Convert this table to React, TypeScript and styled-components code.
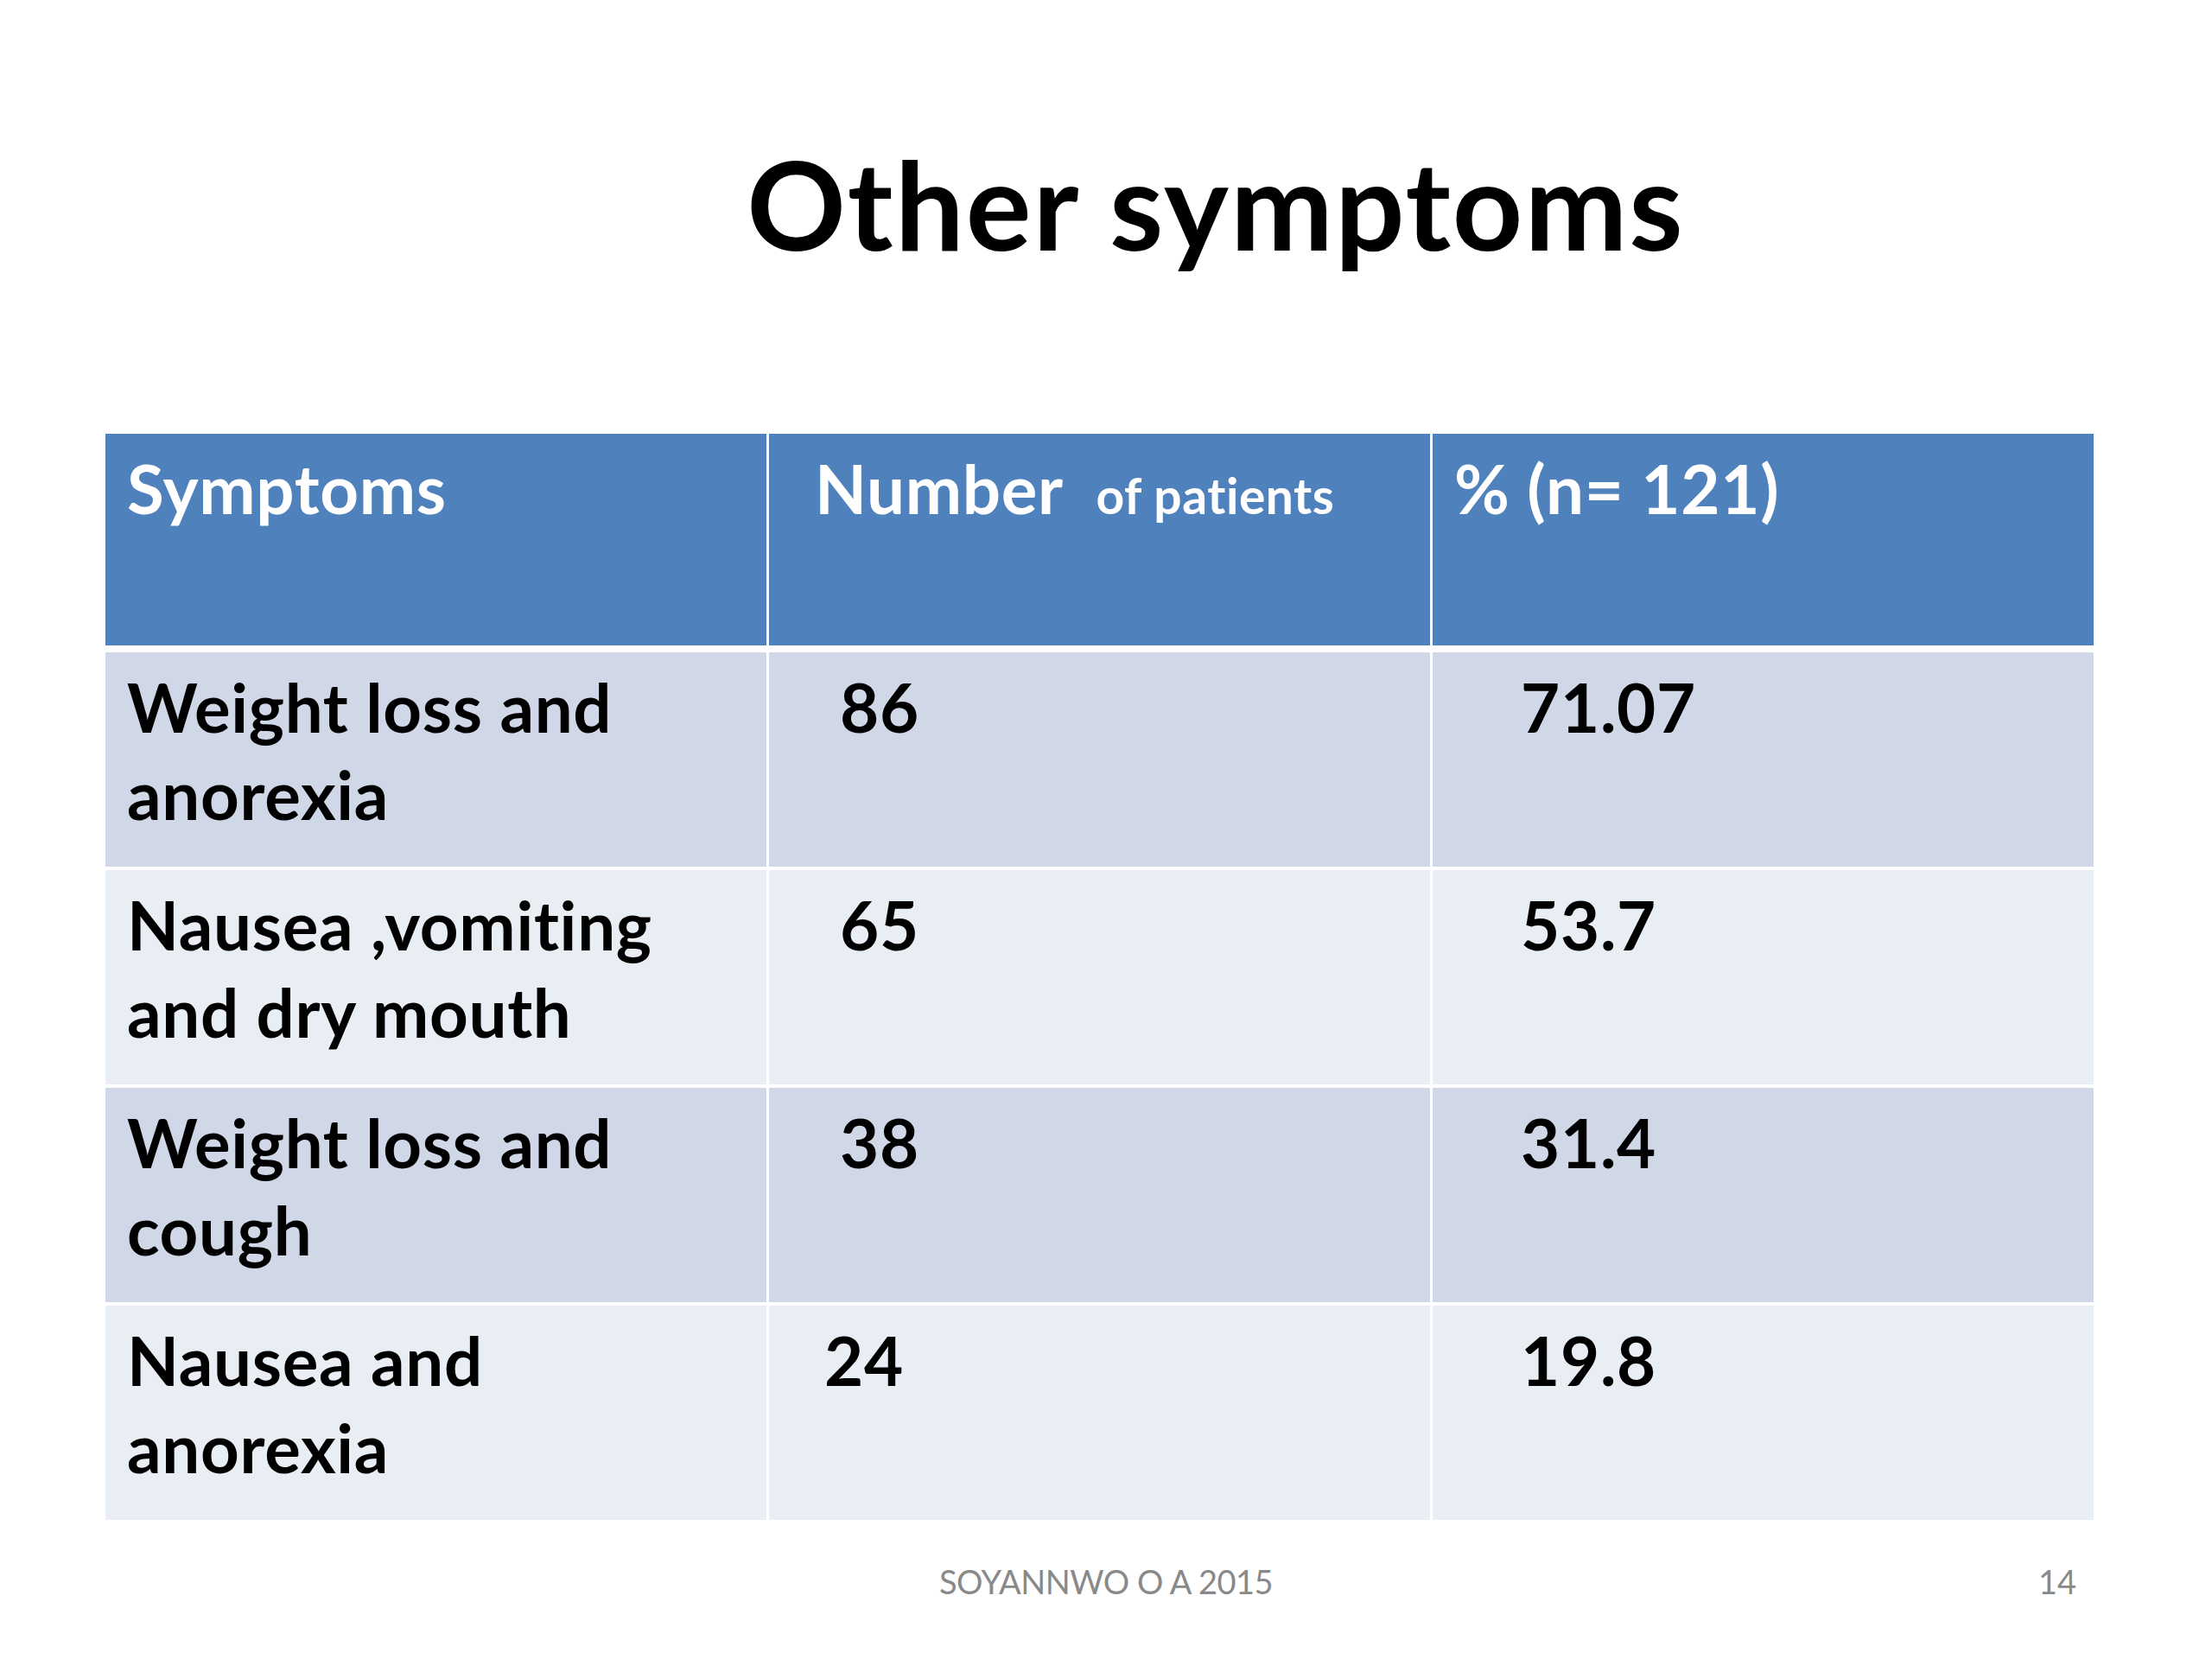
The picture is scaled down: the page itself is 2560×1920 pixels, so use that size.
import React from "react";
import styled, { createGlobalStyle } from "styled-components";

const Global = createGlobalStyle`
  html, body { margin: 0; padding: 0; background: #ffffff; }
  body { font-family: Lato, "Open Sans", sans-serif; }
`;

const Slide = styled.div`
  width: 2560px;
  height: 1920px;
  background: #ffffff;
  display: flex;
  flex-direction: column;
  overflow: hidden;
`;

const TitleBar = styled.div`
  padding: 164px 0 0 254px;
  height: 502px;
  flex-shrink: 0;
  box-sizing: border-box;
  text-align: center;
`;

const Title = styled.h1`
  margin: 0;
  font-family: Lato, sans-serif;
  font-weight: 700;
  font-size: 142px;
  line-height: 142px;
  color: #000000;
  letter-spacing: 2px;
`;

const Table = styled.div`
  margin-left: 122px;
  width: 2301px;
  display: flex;
  flex-direction: column;
  gap: 4px;
`;

const Row = styled.div<{ $kind: "head" | "odd" | "even" }>`
  display: grid;
  grid-template-columns: repeat(3, 1fr);
  column-gap: 3px;
  height: ${(p) => (p.$kind === "head" ? "245px" : "248px")};
  margin-bottom: ${(p) => (p.$kind === "head" ? "4px" : "0")};
`;

const Cell = styled.div<{ $kind: "head" | "odd" | "even"; $indent?: number }>`
  background: ${(p) =>
    p.$kind === "head" ? "#4f81bd" : p.$kind === "odd" ? "#d0d8e8" : "#e9edf4"};
  color: ${(p) => (p.$kind === "head" ? "#ffffff" : "#000000")};
  padding: 13px 20px 0 ${(p) => 25 + (p.$indent ?? 0)}px;
  font-family: Lato, sans-serif;
  font-weight: 700;
  font-size: 78px;
  line-height: 101px;
  letter-spacing: 0.7px;
  box-sizing: border-box;
`;

const Small = styled.span`
  font-size: 57px;
  letter-spacing: 0.5px;
`;

const Footer = styled.div`
  margin-top: 52px;
  padding: 0 157px;
  display: grid;
  grid-template-columns: 1fr auto 1fr;
  font-family: Lato, sans-serif;
  font-size: 38px;
  line-height: 38px;
  color: #898989;
`;

const FooterCenter = styled.div`
  grid-column: 2;
  letter-spacing: -0.5px;
`;

const FooterRight = styled.div`
  grid-column: 3;
  text-align: right;
`;

const rows = [
  { s: ["Weight loss and", "anorexia"], n: "86", ni: 57, p: "71.07" },
  { s: ["Nausea ,vomiting", "and dry mouth"], n: "65", ni: 57, p: "53.7" },
  { s: ["Weight loss and", "cough"], n: "38", ni: 57, p: "31.4" },
  { s: ["Nausea and", "anorexia"], n: "24", ni: 39, p: "19.8" },
];

export default function App() {
  return (
    <>
      <Global />
      <Slide>
        <TitleBar>
          <Title>Other symptoms</Title>
        </TitleBar>
        <Table>
          <Row $kind="head">
            <Cell $kind="head">Symptoms</Cell>
            <Cell $kind="head" $indent={28}>
              Number&nbsp; <Small>of patients</Small>
            </Cell>
            <Cell $kind="head">% (n= 121)</Cell>
          </Row>
          {rows.map((r, i) => {
            const kind = i % 2 === 0 ? "odd" : "even";
            return (
              <Row $kind={kind} key={i}>
                <Cell $kind={kind}>
                  {r.s[0]}
                  <br />
                  {r.s[1]}
                </Cell>
                <Cell $kind={kind} $indent={r.ni}>
                  {r.n}
                </Cell>
                <Cell $kind={kind} $indent={77}>
                  {r.p}
                </Cell>
              </Row>
            );
          })}
        </Table>
        <Footer>
          <FooterCenter>SOYANNWO O A 2015</FooterCenter>
          <FooterRight>14</FooterRight>
        </Footer>
      </Slide>
    </>
  );
}
